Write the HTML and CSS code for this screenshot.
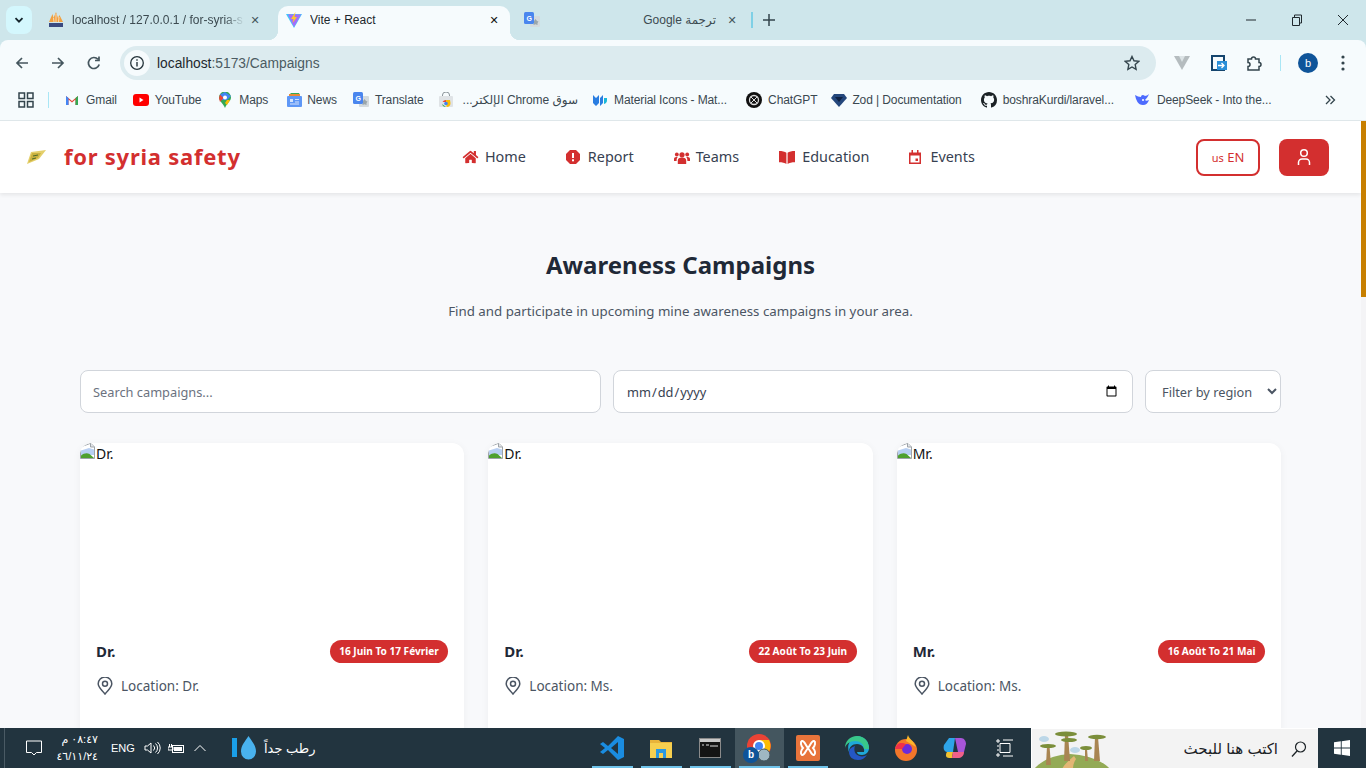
FILE: index.html
```html
<!DOCTYPE html>
<html lang="en">
<head>
<meta charset="utf-8">
<title>Vite + React</title>
<link rel="stylesheet" href="styles.css">
</head>
<body>
<div class="screen">
  <div class="tabstrip">
    <button class="tabsearch"><svg width="12" height="12" viewBox="0 0 12 12"><path d="M2.500 4.200 6 7.700l3.500-3.500" fill="none" stroke="#15252c" stroke-width="1.800"/></svg></button>
    <div class="tab tab-pma">
      <svg class="fav" width="16" height="16" viewBox="0 0 16 16"><path d="M1 10 4.500 2l1 4L8 0l2 6 1.500-3L15 10z" fill="#f0a040"/><path d="M5.500 6 6 10M8 2v8M11 5l-.500 5" stroke="#fff" stroke-width=".600"/><rect x="1" y="11" width="14" height="4" fill="#3a4a80"/></svg>
      <span class="tabtitle fade">localhost / 127.0.0.1 / for-syria-s</span>
      <span class="tabx">✕</span>
    </div>
    <div class="tab tab-active">
      <svg class="fav" width="16" height="16" viewBox="0 0 16 16"><path d="M0 2h16L8 16z" fill="#41c7fb"/><path d="M2 2.500h13L8 15z" fill="#a66cf8"/><path d="M9.500 0 5 7h2.500L6.500 11 11 5H8.500z" fill="#fcc72b"/></svg>
      <span class="tabtitle">Vite + React</span>
      <span class="tabx strong">✕</span>
    </div>
    <div class="tab tab-tr">
      <svg class="fav" width="16" height="16" viewBox="0 0 16 16"><rect x="6" y="4" width="10" height="11" rx="1" fill="#d4dadd"/><path d="M10 9l1.500-2 1.500 2 1.500.5-1 1.500v2l-2-.7-2 .7z" fill="#9aa5aa"/><rect width="10" height="12" rx="1.500" fill="#4a86ee"/><text x="2.500" y="9" class="svgtx">G</text></svg>
      <span class="tabtitle center" dir="rtl">ترجمة Google</span>
      <span class="tabx">✕</span>
    </div>
    <span class="tabsep"></span>
    <span class="newtab"><svg width="12" height="12" viewBox="0 0 12 12"><path d="M6 0v12M0 6h12" stroke="#33444c" stroke-width="1.500"/></svg></span>
    <div class="wincontrols">
      <svg width="12" height="12" viewBox="0 0 12 12"><path d="M1 6h10" stroke="#20292e"/></svg>
      <svg width="12" height="12" viewBox="0 0 12 12"><path d="M1.500 3.500h7v8h-7zM3.500 3.500v-2.500h7v8h-2" fill="none" stroke="#20292e"/></svg>
      <svg width="12" height="12" viewBox="0 0 12 12"><path d="M1 1l10 10M11 1 1 11" stroke="#20292e"/></svg>
    </div>
  </div>

  <div class="toolbar">
    <svg class="tb" width="16" height="16" viewBox="0 0 16 16"><path d="M14 8H3M8 3 3 8l5 5" fill="none" stroke="#45565e" stroke-width="1.700"/></svg>
    <svg class="tb" width="16" height="16" viewBox="0 0 16 16"><path d="M2 8h11M8 3l5 5-5 5" fill="none" stroke="#45565e" stroke-width="1.700"/></svg>
    <svg class="tb" width="16" height="16" viewBox="0 0 16 16"><path d="M13.200 9.500A5.500 5.500 0 1 1 12 4.300M13 1.500v4H9" fill="none" stroke="#45565e" stroke-width="1.700"/></svg>
    <div class="omnibox">
      <span class="sitebtn"><svg width="16" height="16" viewBox="0 0 16 16"><circle cx="8" cy="8" r="6.300" fill="none" stroke="#25343b" stroke-width="1.300"/><path d="M8 7v4.500M8 4.300v1.500" stroke="#25343b" stroke-width="1.400"/></svg></span>
      <span class="url"><b>localhost</b>:5173/Campaigns</span>
      <svg class="star" width="16" height="16" viewBox="0 0 16 16"><path d="m8 1.500 2 4.300 4.700.6-3.500 3.200.9 4.700L8 12l-4.100 2.300.9-4.700L1.300 6.400 6 5.800z" fill="none" stroke="#33444c" stroke-width="1.400"/></svg>
    </div>
    <svg class="ext first" width="16" height="16" viewBox="0 0 16 16"><path d="M0 1h16L8 15z" fill="#b5bcbf"/><path d="M5 1h6L8 7z" fill="#dce3e6"/></svg>
    <svg class="ext second" width="18" height="18" viewBox="0 0 18 18"><path d="M2 2h12v14H2z" fill="none" stroke="#15456e" stroke-width="2"/><rect x="7" y="7" width="10" height="9" fill="#2b8fd8"/><path d="M8 11.500h6M11.500 9l2.500 2.500-2.500 2.500" fill="none" stroke="#fff" stroke-width="1.300"/></svg>
    <svg class="ext third" width="18" height="18" viewBox="0 0 18 18"><path d="M3 5h3.500a2 2 0 0 1 4 0H14v3.500a2 2 0 0 1 0 4V16H3v-3.500a2 2 0 0 0 0-4z" fill="none" stroke="#33444c" stroke-width="1.500"/></svg>
    <span class="sep-v"></span>
    <span class="avatar">b</span>
    <svg class="menu" width="4" height="16" viewBox="0 0 4 16"><circle cx="2" cy="2" r="1.600" fill="#33444c"/><circle cx="2" cy="8" r="1.600" fill="#33444c"/><circle cx="2" cy="14" r="1.600" fill="#33444c"/></svg>
  </div>

  <div class="bookmarks">
    <svg class="apps" width="16" height="16" viewBox="0 0 16 16"><path d="M1 1h5.500v5.500H1zM9.500 1H15v5.500H9.500zM1 9.500h5.500V15H1zM9.500 9.500H15V15H9.500z" fill="none" stroke="#33444c" stroke-width="1.500"/></svg>
    <span class="sep-v small"></span>
    <a class="bm bm-gmail"><svg width="14" height="14" viewBox="0 0 14 14"><path d="M1 12V3l6 5 6-5v9h-2.500V6.500L7 9.500 3.500 6.500V12z" fill="#ea4335"/><path d="M1 12V3l2.500 2v7z" fill="#4285f4"/><path d="M13 12V3l-2.500 2v7z" fill="#34a853"/></svg>Gmail</a>
    <a class="bm bm-yt"><svg width="16" height="12" viewBox="0 0 16 12"><rect width="16" height="12" rx="3" fill="#f00"/><path d="m6.500 3.500 4 2.500-4 2.500z" fill="#fff"/></svg>YouTube</a>
    <a class="bm bm-maps"><svg width="12" height="16" viewBox="0 0 12 16"><path d="M6 16C4 11 0 9 0 5.500a6 6 0 0 1 12 0C12 9 8 11 6 16z" fill="#34a853"/><path d="M1 2.500 6 0l6 4-4 4H3z" fill="#4285f4"/><path d="M1 2.500 4.500 6 1 10 0 6z" fill="#ea4335"/><path d="M8 8h3l-3 5-2-2z" fill="#fbbc04"/><circle cx="6" cy="5.500" r="2" fill="#fff"/></svg>Maps</a>
    <a class="bm bm-news"><svg width="15" height="14" viewBox="0 0 15 14"><path d="M2 2 4 0h8l1 2z" fill="#34a853"/><path d="M2 1h11v3H2z" fill="#ea8a35"/><rect y="3" width="15" height="11" rx="1" fill="#5e97f6"/><path d="M3 6h3v3H3zM8 6h4v1H8zM8 8.500h4v1H8zM3 10.500h9v1H3z" fill="#d5e4fc"/></svg>News</a>
    <a class="bm bm-tran"><svg width="16" height="16" viewBox="0 0 16 16"><rect x="6" y="4" width="10" height="11" rx="1" fill="#d4dadd"/><path d="M10 9l1.500-2 1.500 2 1.500.5-1 1.500v2l-2-.7-2 .7z" fill="#9aa5aa"/><rect width="10" height="12" rx="1.500" fill="#4a86ee"/><text x="2.500" y="9" class="svgtx">G</text></svg>Translate</a>
    <a class="bm bm-store"><svg width="14" height="16" viewBox="0 0 14 16"><path d="M3.500 5V3a3.500 3 0 0 1 7 0v2" fill="none" stroke="#8a9499"/><rect y="4" width="14" height="11" rx="1" fill="#dfe3e6"/><path d="M7 8a4 4 0 0 0-3.500 2H7z" fill="#ea4335"/><path d="M3 12a4 4 0 0 0 4 3z" fill="#34a853"/><path d="M7 8h4l.500 3a4 4 0 0 1-4 4z" fill="#fbbc04"/><circle cx="7" cy="11.500" r="1.800" fill="#4285f4"/></svg><span class="rtl" dir="rtl">سوق Chrome الإلكتر...</span></a>
    <a class="bm bm-mat"><svg width="15" height="14" viewBox="0 0 15 14"><path d="M0 2l3 3 3-3v8l-3 3-3-3zM7 5l3-3v8l-3 3z" fill="#2a7de1"/><path d="M11 5h3v2a4 4 0 0 1-3 4z" fill="#1ab8d8"/></svg>Material Icons - Mat...</a>
    <a class="bm bm-gpt"><svg width="16" height="16" viewBox="0 0 16 16"><circle cx="8" cy="8" r="8" fill="#111"/><circle cx="8" cy="8" r="4.500" fill="none" stroke="#ddd" stroke-width="1.300"/><path d="M5 5l6 6M11 5l-6 6" stroke="#ddd"/></svg>ChatGPT</a>
    <a class="bm bm-zod"><svg width="16" height="13" viewBox="0 0 16 13"><path d="M3 0h10l3 4-8 9-8-9z" fill="#24477c"/><path d="M4 3h8l-4 5z" fill="#0e2244"/></svg>Zod | Documentation</a>
    <a class="bm bm-gh"><svg width="16" height="16" viewBox="0 0 16 16"><path d="M8 0C3.580 0 0 3.580 0 8c0 3.540 2.290 6.530 5.470 7.590.4.070.55-.17.55-.38 0-.19-.010-.82-.010-1.490-2.010.37-2.530-.49-2.690-.94-.09-.23-.48-.94-.82-1.130-.28-.15-.68-.52-.010-.53.63-.010 1.080.58 1.230.82.72 1.210 1.870.87 2.330.66.070-.52.28-.87.51-1.070-1.780-.2-3.640-.89-3.640-3.950 0-.87.31-1.590.82-2.150-.08-.2-.36-1.020.08-2.120 0 0 .67-.21 2.200.82.64-.18 1.320-.27 2-.27s1.360.09 2 .27c1.530-1.040 2.200-.82 2.200-.82.44 1.100.16 1.920.08 2.120.51.56.82 1.270.82 2.150 0 3.070-1.870 3.750-3.650 3.950.29.25.54.73.54 1.480 0 1.070-.010 1.930-.010 2.200 0 .21.15.46.55.38A8.010 8.010 0 0 0 16 8c0-4.420-3.580-8-8-8z" fill="#1b2226"/></svg>boshraKurdi/laravel...</a>
    <a class="bm bm-ds"><svg width="16" height="14" viewBox="0 0 16 14"><path d="M1 2c1 5 3 10 8 10 3 0 5-2 6-5-2 1-3 1-4 0 1-1 3-3 4-6-1 1-3 2-4 2C9 1 7 2 7 4 5 4 3 3 1 2z" fill="#4d6bfe"/><circle cx="9" cy="7" r="1" fill="#fff"/></svg>DeepSeek - Into the...</a>
    <svg class="more" width="12" height="12" viewBox="0 0 12 12"><path d="m2 2 4 4-4 4M6.500 2l4 4-4 4" fill="none" stroke="#33444c" stroke-width="1.300"/></svg>
  </div>

  <div class="viewport">
    <div class="page">
      <header class="nav">
        <div class="brand">
          <svg width="20" height="14" viewBox="0 0 20 14"><path d="M5 2 20 0 13 9 1 14z" fill="#e4cf6a"/><path d="M6 3h9L12 8 3 12z" fill="#c9b13f"/><path d="M7 6l5-1M6 9l4-1" stroke="#4c6a2c"/></svg>
          <span class="brandname">for syria safety</span>
        </div>
        <nav class="links">
          <a class="link"><svg width="17" height="14" viewBox="0 0 576 512"><path d="M280.370 148.260 96 300.110V464a16 16 0 0 0 16 16l112.060-.29a16 16 0 0 0 15.920-16V368a16 16 0 0 1 16-16h64a16 16 0 0 1 16 16v95.640a16 16 0 0 0 16 16.050L464 480a16 16 0 0 0 16-16V300L295.670 148.260a12.190 12.190 0 0 0-15.300 0zM571.600 251.470 488 182.560V44.050a12 12 0 0 0-12-12h-56a12 12 0 0 0-12 12v72.610L318.470 43a48 48 0 0 0-61 0L4.340 251.470a12 12 0 0 0-1.600 16.900l25.500 31A12 12 0 0 0 45.150 301l235.220-193.740a12.190 12.190 0 0 1 15.300 0L530.900 301a12 12 0 0 0 16.900-1.600l25.500-31a12 12 0 0 0-1.700-16.930z" fill="#d32f2f"/></svg>Home</a>
          <a class="link link-report"><svg width="14" height="14" viewBox="0 0 14 14"><path d="M4 0h6l4 4v6l-4 4H4L0 10V4z" fill="#d32f2f"/><rect x="6" y="3" width="2" height="5" fill="#fff"/><rect x="6" y="9.300" width="2" height="2" fill="#fff"/></svg>Report</a>
          <a class="link link-teams"><svg width="16" height="13" viewBox="0 0 16 13"><circle cx="8" cy="3.800" r="2.600" fill="#d32f2f"/><circle cx="2.800" cy="3.500" r="1.900" fill="#d32f2f"/><circle cx="13.200" cy="3.500" r="1.900" fill="#d32f2f"/><path d="M3.800 13V9.500c0-2 1.500-3 4.200-3s4.200 1 4.200 3V13zM0 10V8c0-1.300.9-2 2.400-2 .6 0 1 .1 1.400.3C2.900 7 2.600 8 2.600 10zM16 10V8c0-1.300-.9-2-2.400-2-.6 0-1 .1-1.400.3.900.7 1.200 1.700 1.200 3.700z" fill="#d32f2f"/></svg>Teams</a>
          <a class="link link-edu"><svg width="16" height="13" viewBox="0 0 16 13"><path d="M0 0c3 0 6 .5 7.400 1.800V13C6 11.700 3 11.200 0 11.200zM16 0c-3 0-6 .5-7.400 1.800V13c1.400-1.300 4.400-1.800 7.400-1.800z" fill="#d32f2f"/></svg>Education</a>
          <a class="link link-ev"><svg width="12" height="14" viewBox="0 0 12 14"><path d="M0 2.500h12V14H0z" fill="#d32f2f"/><path d="M1.500 5.500h9v7h-9z" fill="#fff"/><path d="M2.500 0h1.500v3H2.500zM8 0h1.500v3H8z" fill="#d32f2f"/><rect x="6.500" y="8.500" width="2.500" height="2.500" fill="#d32f2f"/></svg>Events</a>
        </nav>
        <div class="actions">
          <button class="langbtn"><small>us</small> EN</button>
          <button class="userbtn"><svg width="16" height="18" viewBox="0 0 16 18"><circle cx="8" cy="5" r="3.300" fill="none" stroke="#fff" stroke-width="1.500"/><path d="M2.500 17v-2.500A3.500 3.500 0 0 1 6 11h4a3.500 3.500 0 0 1 3.500 3.500V17" fill="none" stroke="#fff" stroke-width="1.500"/></svg></button>
        </div>
      </header>

      <main class="content">
        <h1 class="title">Awareness Campaigns</h1>
        <p class="subtitle">Find and participate in upcoming mine awareness campaigns in your area.</p>
        <div class="filters">
          <input class="field" type="text" placeholder="Search campaigns...">
          <input class="field field-date" type="date">
          <select class="field field-select"><option>Filter by region</option></select>
        </div>
        <div class="cards">
          <article class="card">
            <div class="cardimg"><svg class="broken" width="16" height="16" viewBox="0 0 16 16"><use href="#broken"/></svg>Dr.</div>
            <div class="cardbody">
              <div class="cardhead"><h3>Dr.</h3><span class="badge">16 Juin To 17 Février</span></div>
              <div class="loc"><svg width="16" height="18" viewBox="0 0 16 18"><use href="#pin"/></svg>Location: Dr.</div>
            </div>
          </article>
          <article class="card">
            <div class="cardimg"><svg class="broken" width="16" height="16" viewBox="0 0 16 16"><use href="#broken"/></svg>Dr.</div>
            <div class="cardbody">
              <div class="cardhead"><h3>Dr.</h3><span class="badge">22 Août To 23 Juin</span></div>
              <div class="loc"><svg width="16" height="18" viewBox="0 0 16 18"><use href="#pin"/></svg>Location: Ms.</div>
            </div>
          </article>
          <article class="card">
            <div class="cardimg"><svg class="broken" width="16" height="16" viewBox="0 0 16 16"><use href="#broken"/></svg>Mr.</div>
            <div class="cardbody">
              <div class="cardhead"><h3>Mr.</h3><span class="badge">16 Août To 21 Mai</span></div>
              <div class="loc"><svg width="16" height="18" viewBox="0 0 16 18"><use href="#pin"/></svg>Location: Ms.</div>
            </div>
          </article>
        </div>
      </main>
    </div>
    <div class="scrollbar"><span class="thumb"></span></div>
  </div>

  <div class="taskbar">
    <div class="tray">
      <svg class="notif" width="16" height="16" viewBox="0 0 16 16"><path d="M.5 1h15v11.500H10.500L8 15l-2.500-2.500H.5z" fill="none" stroke="#fff"/></svg>
      <div class="clock"><span dir="rtl">٠٨:٤٧ م</span><span>٤٦/١١/٢٤</span></div>
      <span class="lang">ENG</span>
      <svg class="t-speaker" width="17" height="14" viewBox="0 0 17 14"><path d="M1 5h2.500L7 2v10L3.500 9H1zM9.500 4.500a3.500 3.500 0 0 1 0 5M11.500 2.500a6 6 0 0 1 0 9M13.500 1a8 8 0 0 1 0 12" fill="none" stroke="#fff"/></svg>
      <svg class="t-batt" width="16" height="12" viewBox="0 0 16 12"><rect x="4.500" y="3.500" width="11" height="7" fill="none" stroke="#fff"/><rect x="6" y="5" width="8" height="4" fill="#fff"/><path d="M0 5h5v3H0zM1.500 2v3M3.500 2v3" stroke="#fff" fill="none"/></svg>
      <svg class="t-chev" width="12" height="8" viewBox="0 0 12 8"><path d="M.5 7 6 1.500 11.500 7" fill="none" stroke="#fff"/></svg>
      <div class="weather">
        <svg width="25" height="24" viewBox="0 0 25 24"><rect y="2" width="5" height="19" fill="#1a9fe8"/><path d="M16.500 0c3 5 7.500 9 7.500 15.500a7.500 8 0 0 1-15 0C9 9 13.500 5 16.500 0z" fill="#49b2ee"/></svg>
        <span dir="rtl">رطب جداً</span>
      </div>
    </div>
    <div class="apps-bar">
      <span class="app"><svg width="26" height="26" viewBox="0 0 26 26"><path d="M19 1 9 11 4 7 1 9l5 4-5 4 3 2 5-4 10 10 6-3V4z" fill="#1a8ce0"/><path d="m19 7-7 6 7 6z" fill="#22343f"/></svg></span>
      <span class="app"><svg width="24" height="22" viewBox="0 0 24 22"><path d="M1 3h9l2 2h11v3H1z" fill="#e9b43a"/><rect x="1" y="6" width="22" height="15" fill="#f6cf4f"/><rect x="7" y="12" width="10" height="9" fill="#2a98df"/><rect x="10" y="16" width="4" height="5" fill="#f6cf4f"/></svg></span>
      <span class="app app-split"><svg width="22" height="20" viewBox="0 0 22 20"><rect x=".5" y=".5" width="21" height="19" fill="#141414" stroke="#8a8a8a"/><rect x="1" y="1" width="20" height="3" fill="#c9c9c9"/><path d="M3 7h2M7 7h3M11 8h8" stroke="#ddd"/></svg></span>
      <span class="app app-active"><svg width="32" height="32" viewBox="0 0 32 32"><circle cx="16" cy="14" r="12" fill="#ea4335"/><path d="M16 14 6 20a12 12 0 0 0 14 5z" fill="#34a853"/><path d="M16 14 20 25a12 12 0 0 0 6-17H16z" fill="#fbbc04"/><circle cx="16" cy="14" r="5" fill="#4285f4" stroke="#fff" stroke-width="2"/><circle cx="21" cy="23" r="6" fill="#9fb7c2" stroke="#44565f"/><circle cx="8" cy="23" r="8" fill="#0f5499"/><text x="8" y="26" class="svgav">b</text></svg></span>
      <span class="app"><svg width="24" height="26" viewBox="0 0 24 26"><rect width="24" height="26" rx="2" fill="#e8743b"/><path d="M12 13C9 9 8 5 6 6c-2 1-1 5 1 7-2 2-3 6-1 7 2 1 3-3 6-7zM12 13c3-4 4-8 6-7 2 1 1 5-1 7 2 2 3 6 1 7-2 1-3-3-6-7z" fill="none" stroke="#fff" stroke-width="2"/></svg></span>
      <span class="app"><svg width="26" height="26" viewBox="0 0 26 26"><path d="M13 1a12 12 0 0 1 12 12c0 4-3 7-7 7-3 0-5-1-5-3h7c1-4-2-8-7-8-5 0-8 3-8 8A12 12 0 0 1 13 1z" fill="#1fa8d8"/><path d="M5 17c0 5 4 8 9 8 4 0 7-2 9-5-3 2-8 2-11-1-2-2-2-6-1-8-3 1-6 3-6 6z" fill="#2457c5"/><path d="M13 1C6 1 1 6 1 13c1-4 5-7 10-7s9 3 9 8h5C25 6 20 1 13 1z" fill="#39c88a"/></svg></span>
      <span class="app"><svg width="24" height="26" viewBox="0 0 24 26"><circle cx="12" cy="15" r="11" fill="#f3762a"/><path d="M14 0c1 4 6 6 8 12L12 6z" fill="#fcb62a"/><circle cx="13" cy="14" r="5" fill="#6c2bd9"/><path d="M1 14C3 6 9 8 12 9L8 14z" fill="#f0304a"/></svg></span>
      <span class="app"><svg width="24" height="24" viewBox="0 0 24 24"><path d="M6 2h6l-2 14H4C1 16 0 12 1 9z" fill="#2ea4e8"/><path d="M12 2h6c3 0 5 3 5 6l-2 8h-6z" fill="#a855d8"/><path d="M4 16h6l-1 6H6c-3 0-4-3-2-6z" fill="#f2c230"/><path d="M10 16h11c0 4-3 6-6 6H9z" fill="#f0608a"/></svg></span>
      <span class="app app-tv"><svg width="18" height="18" viewBox="0 0 18 18"><path d="M4 4.500h10v9H4zM1 1h2v2H1zM7 1h10M1 7h2M1 11h2M1 15h2v2H1zM7 17h10" fill="none" stroke="#fff"/></svg></span>
    </div>
    <div class="searchbox">
      <svg class="scene" width="80" height="40" viewBox="0 0 80 40"><path d="M2 40c8-9 20-14 36-15 16 1 32 6 40 15z" fill="#93aa55"/><path d="M30 40c2-4 6-8 12-13l2 3c-2 3-3 6-3 10z" fill="#e3b675"/><path d="M33 5h3l2 27h-6z" fill="#a98552"/><path d="M15 17h2.500l1.500 19h-5z" fill="#a98552"/><path d="M63 8h3l2 24h-6z" fill="#a98552"/><path d="M53 20h2l1 12h-3z" fill="#a98552"/><ellipse cx="34" cy="5" rx="11" ry="2.500" fill="#7b8e3a"/><ellipse cx="37" cy="11" rx="8" ry="2" fill="#7b8e3a"/><ellipse cx="16" cy="17" rx="8" ry="2" fill="#7b8e3a"/><ellipse cx="65" cy="8" rx="9" ry="2.200" fill="#7b8e3a"/><ellipse cx="54" cy="19" rx="6" ry="2" fill="#7b8e3a"/><ellipse cx="12" cy="10" rx="5" ry="3" fill="#bcd7e8"/><ellipse cx="43" cy="21" rx="5" ry="3" fill="#bcd7e8"/></svg>
      <span class="searchtext" dir="rtl">اكتب هنا للبحث</span>
      <svg width="16" height="16" viewBox="0 0 16 16"><circle cx="9.500" cy="6" r="5" fill="none" stroke="#1b2226" stroke-width="1.200"/><path d="M6 10 1 15.500" stroke="#1b2226" stroke-width="1.300"/></svg>
    </div>
    <div class="startbtn"><svg width="16" height="16" viewBox="0 0 16 16"><path d="M0 2.300 6.800 1.300v6.200H0zM7.700 1.200 16 0v7.500H7.700zM0 8.500h6.800v6.200L0 13.700zM7.700 8.500H16V16l-8.300-1.200z" fill="#fff"/></svg></div>
  </div>
</div>
<svg class="defs" width="0" height="0">
  <defs>
    <g id="broken"><path d="M.5 15.500V4L10 .5h1l3.500 3.500v11.500z" fill="#fff" stroke="#9da3a8"/><path d="M10.500 .5v3.500h4" fill="#e3e6ea" stroke="#9da3a8"/><path d="M1 7.500 9 5l5 1.500V12H1z" fill="#b7cff2"/><path d="M1 15v-2.500c3-2.500 6-3 8.500-1.500l4.500 4z" fill="#4ea02e"/></g>
    <g id="pin"><path d="M8 17C5 13 1.200 10.500 1.200 6.800a6.800 6.800 0 0 1 13.600 0C14.800 10.500 11 13 8 17z" fill="none" stroke="#4b5563" stroke-width="1.500"/><circle cx="8" cy="6.800" r="2.500" fill="none" stroke="#4b5563" stroke-width="1.500"/></g>
  </defs>
</svg>
</body>
</html>
```
FILE: styles.css
```css
* { box-sizing: border-box; }
html, body { margin: 0; padding: 0; height: 100%; overflow: hidden; }
body { font-family: "Noto Sans", "DejaVu Sans", sans-serif; }
svg { flex: none; display: block; }
.defs { position: absolute; }
.svgtx { font: 700 7px "Liberation Sans", sans-serif; fill: #fff; }
.svgav { font: 700 10px "Liberation Sans", sans-serif; fill: #fff; text-anchor: middle; }

.screen { width: 1366px; height: 768px; display: flex; flex-direction: column; background: #cee6eb; }

/* tab strip */
.tabstrip { height: 40px; display: flex; align-items: flex-end; padding-left: 6px; flex: none; }
.tabsearch { width: 26px; height: 28px; margin-bottom: 6px; margin-right: 8px; border: 0; padding: 0; background: #d4f7fd; border-radius: 8px; display: flex; align-items: center; justify-content: center; }
.tab { height: 34px; padding-bottom: 6px; display: flex; align-items: center; font: 12px "Liberation Sans", "DejaVu Sans", sans-serif; color: #3c4a50; position: relative; }
.fav { margin-right: 8px; }
.tab-pma { width: 238px; padding-left: 8px; }
.tab-pma .tabtitle { width: 173px; margin-right: 2px; }
.tab-active { width: 232px; padding-left: 8px; background: #f6fbfd; border-radius: 10px 10px 0 0; color: #1d282d; }
.tab-active::before, .tab-active::after { content: ""; position: absolute; bottom: 0; width: 10px; height: 10px; }
.tab-active::before { left: -10px; background: radial-gradient(circle at 0 0, transparent 10px, #f6fbfd 10.500px); }
.tab-active::after { right: -10px; background: radial-gradient(circle at 100% 0, transparent 10px, #f6fbfd 10.500px); }
.tab-active .tabtitle { flex: 1; }
.tab-tr { width: 241px; padding-left: 14px; }
.tab-tr .tabtitle.center { flex: 1; margin-right: 8px; }
.tabtitle { white-space: nowrap; overflow: hidden; }
.fade { -webkit-mask-image: linear-gradient(90deg, #000 88%, transparent); mask-image: linear-gradient(90deg, #000 88%, transparent); }
.tabx { width: 16px; font-size: 11px; color: #44555c; text-align: center; margin-right: 15px; }
.tabx.strong { color: #111; margin-right: 8px; }
.tab-tr .tabx { margin-right: 11px; }
.tabsep { width: 2px; height: 16px; background: #7fd0e6; margin-bottom: 12px; }
.newtab { margin: 0 0 12px 10px; height: 16px; display: flex; align-items: center; }
.wincontrols { margin-left: auto; height: 40px; display: flex; align-items: center; gap: 34px; padding-right: 17px; align-self: flex-start; }

/* toolbar */
.toolbar { height: 40px; background: #f6fbfd; border-radius: 8px 8px 0 0; display: flex; align-items: center; padding: 6px 0 0 14px; flex: none; }
.tb { margin-right: 20px; }
.tb:nth-child(3) { margin-right: 18px; }
.omnibox { width: 1036px; height: 34px; border-radius: 17px; background: #dcebef; display: flex; align-items: center; padding: 0 16px 0 4px; }
.sitebtn { width: 26px; height: 26px; border-radius: 50%; background: #f6fbfd; display: flex; align-items: center; justify-content: center; margin-right: 7px; }
.url { font: 13.800px "Liberation Sans", sans-serif; color: #4b5b62; flex: 1; }
.url b { font-weight: 400; color: #1d282d; }
.ext { margin-left: 18px; }
.ext.second { margin-left: 20px; }
.ext.third { margin-left: 17px; }
.sep-v { width: 1px; height: 16px; background: #a9e6f5; margin: 0 17px; }
.avatar { width: 20px; height: 20px; border-radius: 50%; background: #0f5499; color: #fff; font: 11px/20px "Liberation Sans", sans-serif; text-align: center; }
.menu { margin-left: 23px; }

/* bookmarks */
.bookmarks { height: 41px; background: #f6fbfd; border-bottom: 1px solid #dfe7ea; display: flex; align-items: center; padding-left: 18px; font: 12px "Liberation Sans", "DejaVu Sans", sans-serif; letter-spacing: -.1px; color: #3a4850; flex: none; }
.sep-v.small { margin: 0 16px 0 14px; }
.bm { display: flex; align-items: center; gap: 7px; white-space: nowrap; margin-right: 16px; }
.bm-gmail { margin-right: 16px; }
.bm-yt { gap: 6px; margin-right: 18px; }
.bm-maps { gap: 8px; margin-right: 19px; }
.bm-news { gap: 5px; margin-right: 16px; }
.bm-tran { gap: 6px; margin-right: 15px; }
.bm-store { gap: 10px; margin-right: 15px; }
.bm-mat { gap: 6px; margin-right: 19px; }
.bm-gpt { gap: 6px; margin-right: 14px; }
.bm-zod { gap: 5px; margin-right: 19px; }
.bm-gh { gap: 6px; margin-right: 20px; }
.rtl { direction: rtl; }
.more { margin-left: auto; margin-right: 30px; }

/* page */
.viewport { flex: 1; min-height: 0; display: flex; overflow: hidden; }
.page { flex: 1; min-width: 0; background: #f8f9fb; overflow: hidden; }
.scrollbar { width: 5px; background: #f4f4f6; flex: none; }
.thumb { display: block; height: 176px; background: #c77f00; }
.nav { height: 72px; background: #fff; box-shadow: 0 2px 4px rgba(0,0,0,.08); display: flex; justify-content: space-between; align-items: center; padding: 0 32px 0 26px; position: relative; }
.brand { display: flex; align-items: center; gap: 18px; }
.brandname { font-size: 22px; line-height: 30px; padding-bottom: 2px; font-weight: 700; color: #d32f2f; letter-spacing: .75px; white-space: nowrap; }
.links { display: flex; align-items: center; gap: 40px; }
.link { display: flex; align-items: center; gap: 6px; font-size: 14.400px; line-height: 20px; color: #374151; white-space: nowrap; }
.link-report { gap: 8px; }
.link-edu { gap: 7px; }
.link-ev { gap: 9px; }
.actions { display: flex; gap: 19px; }
.langbtn { width: 64px; height: 37px; border: 2px solid #d32f2f; border-radius: 8px; background: #fff; color: #d32f2f; font: 13px "Noto Sans", sans-serif; padding: 0; }
.langbtn small { font-size: 11px; }
.userbtn { width: 50px; height: 37px; border: 0; border-radius: 8px; background: #d32f2f; display: flex; align-items: center; justify-content: center; padding: 0; }

.content { padding: 0 80px; }
.title { margin: 55px 0 0; text-align: center; font-size: 24px; line-height: 34px; font-weight: 700; color: #1f2937; }
.subtitle { margin: 19px 0 0; text-align: center; font-size: 13.300px; line-height: 20px; color: #4b5563; }
.filters { margin-top: 49px; display: grid; grid-template-columns: 521px 520px 136px; gap: 12px; }
.field { height: 43px; border: 1px solid #d1d5db; border-radius: 8px; background: #fff; font: 12.800px "Noto Sans", sans-serif; color: #374151; padding: 0 12px; }
.field::placeholder { color: #6b7280; }
.field-select { padding: 0 2px 0 12px; color: #4b5563; }
.cards { margin-top: 30px; display: grid; grid-template-columns: repeat(3, 1fr); gap: 24px; }
.card { background: #fff; border-radius: 12px; box-shadow: 0 2px 8px rgba(0,0,0,.05); height: 400px; overflow: hidden; }
.cardimg { height: 180px; display: flex; align-items: flex-start; font: 14px/22px "Noto Sans", sans-serif; color: #111; }
.cardbody { padding: 17px 16px; }
.cardhead { display: flex; justify-content: space-between; align-items: center; height: 23px; }
.cardhead h3 { margin: 0; padding-bottom: 2px; font-size: 15px; font-weight: 700; color: #1f2937; }
.badge { height: 23px; border-radius: 12px; background: #d32f2f; color: #fff; font-size: 10.100px; font-weight: 700; line-height: 23px; padding: 0 9.500px; white-space: nowrap; }
.loc { margin-top: 14px; display: flex; align-items: center; gap: 8px; font-size: 13.500px; color: #4b5563; }
.loc svg { margin-left: 1px; }

/* taskbar */
.taskbar { height: 40px; background: #22343f; display: flex; align-items: center; color: #fff; flex: none; font: 12px "Liberation Sans", "DejaVu Sans", sans-serif; }
.tray { height: 40px; display: flex; align-items: center; padding-left: 21px; margin-left: 4px; border-left: 1px solid #4a5a64; width: 584px; }
.notif { margin-right: 18px; }
.clock { display: flex; flex-direction: column; align-items: flex-end; line-height: 17px; font-size: 11px; width: 38px; margin-right: 13px; white-space: nowrap; }
.lang { font-size: 11px; width: 23px; margin-right: 10px; }
.t-batt { margin-left: 7px; }
.t-chev { margin-left: 10px; }
.weather { display: flex; align-items: center; gap: 7px; margin-left: 26px; font-size: 13px; }
.apps-bar { width: 443px; display: flex; align-items: stretch; height: 40px; }
.app { width: 49px; display: flex; align-items: center; justify-content: center; position: relative; }
.app:nth-child(-n+5)::after { content: ""; position: absolute; left: 4px; right: 4px; bottom: 0; height: 2px; background: #6fc3ea; }
.app-active { background: #44565f; }
.app-tv { width: 52px; }
.searchbox { width: 287px; height: 40px; background: #f3f3f3; border: solid #fff; border-width: 1px 0 0 1px; display: flex; align-items: center; color: #1b2226; padding-right: 11px; font-size: 15px; }
.scene { margin-right: auto; }
.searchtext { margin-right: 13px; }
.startbtn { flex: 1; display: flex; align-items: center; justify-content: center; }
```
